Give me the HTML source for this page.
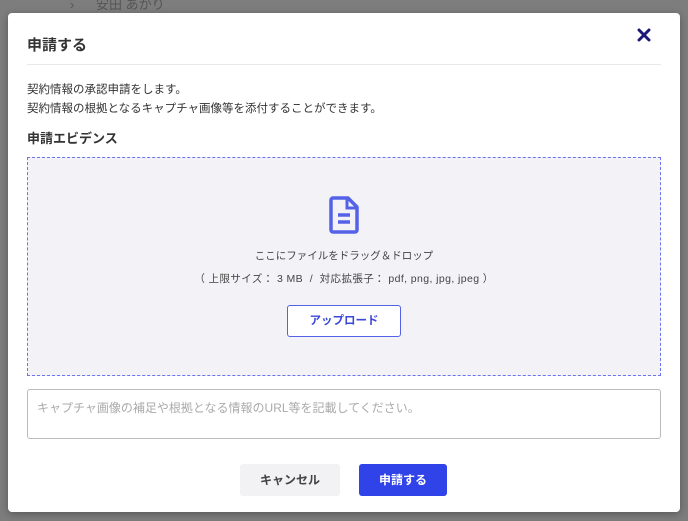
<!DOCTYPE html>
<html><head><meta charset="utf-8"><style>
body{margin:0;width:688px;height:521px;overflow:hidden;background:#7d7d7d;font-family:"Liberation Sans","Noto Sans CJK JP",sans-serif;position:relative}
.bg{position:absolute;color:#5a5a6a;font-size:13px}
.modal{position:absolute;left:8px;top:13px;width:672px;height:499px;background:#fff;border-radius:4px;box-shadow:0 2px 8px rgba(0,0,0,.3)}
.a{position:absolute}
</style></head><body>
<div class="bg" style="left:70px;top:-6px;color:#555">›&nbsp;&nbsp;&nbsp;&nbsp;&nbsp;&nbsp;安田 あかり</div>
<div class="modal">
<div class="a" style="left:19px;top:21px;font-size:15px;font-weight:bold;color:#333">申請する</div>
<svg class="a" style="left:629px;top:15px" width="14" height="14" viewBox="0 0 14 14"><path d="M2 2L12 12M12 2L2 12" stroke="#1a1a7a" stroke-width="3" stroke-linecap="round"/></svg>
<div class="a" style="left:19px;top:51px;width:634px;height:1px;background:#e8e8ec"></div>
<div class="a" style="left:19px;top:68px;font-size:11.5px;color:#333;line-height:19px">契約情報の承認申請をします。<br>契約情報の根拠となるキャプチャ画像等を添付することができます。</div>
<div class="a" style="left:19px;top:115px;font-size:13px;font-weight:bold;color:#333">申請エビデンス</div>
<div class="a" style="left:19px;top:144px;width:632px;height:217px;background:#f3f3f7;border:1px dashed #6b73f0"></div>
<svg class="a" style="left:321px;top:183px" width="30" height="38" viewBox="0 0 30 38"><path d="M4 2H19L28 11V34A2 2 0 0 1 26 36H4A2 2 0 0 1 2 34V4A2 2 0 0 1 4 2Z" fill="none" stroke="#5462e8" stroke-width="3.5" stroke-linejoin="round"/><path d="M18 2V12H28" fill="none" stroke="#5462e8" stroke-width="3"/><path d="M9 19H21M9 26H21" stroke="#5462e8" stroke-width="3.5"/></svg>
<div class="a" style="left:0;width:672px;top:235px;text-align:center;font-size:10.5px;color:#444">ここにファイルをドラッグ＆ドロップ</div>
<div class="a" style="left:0;width:672px;top:258px;text-align:center;font-size:10.5px;color:#444;letter-spacing:0.4px">（ 上限サイズ： 3 MB &nbsp;/&nbsp; 対応拡張子： pdf, png, jpg, jpeg ）</div>
<div class="a" style="left:279px;top:292px;width:112px;height:30px;border:1px solid #5462e8;border-radius:3px;background:#fff;text-align:center;line-height:30px;font-size:11.5px;font-weight:bold;color:#3a48d8">アップロード</div>
<div class="a" style="left:19px;top:376px;width:632px;height:48px;border:1px solid #bbb;border-radius:3px;background:#fff"><div style="padding:9px 9px;font-size:12px;color:#aaa">キャプチャ画像の補足や根拠となる情報のURL等を記載してください。</div></div>
<div class="a" style="left:232px;top:451px;width:100px;height:32px;background:#f2f2f5;border-radius:3px;text-align:center;line-height:32px;font-size:12px;font-weight:bold;color:#444">キャンセル</div>
<div class="a" style="left:351px;top:451px;width:88px;height:32px;background:#2f43e8;border-radius:3px;text-align:center;line-height:32px;font-size:12px;font-weight:bold;color:#fff">申請する</div>
</div>
</body></html>
